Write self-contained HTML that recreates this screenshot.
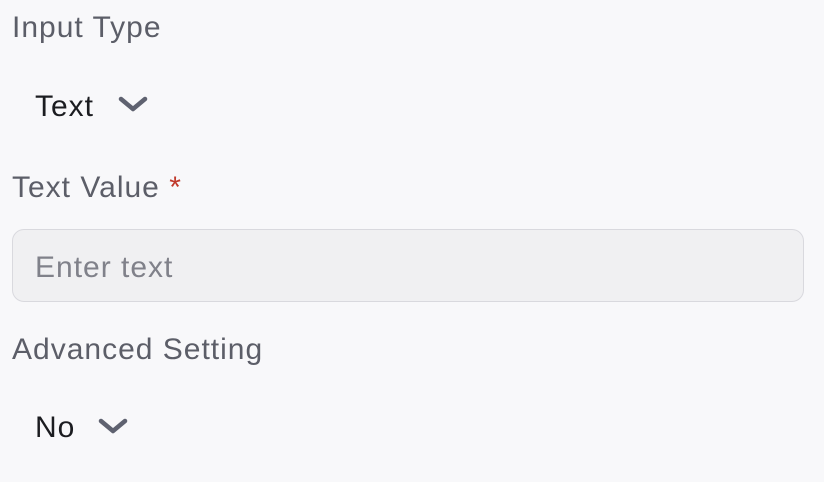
<!DOCTYPE html>
<html><head><meta charset="utf-8"><style>
html,body{margin:0;padding:0;width:824px;height:482px;background:#f8f8fa;overflow:hidden;font-family:"Liberation Sans",sans-serif}
.t{position:absolute;line-height:1;font-size:30px;letter-spacing:1px;white-space:nowrap}
.l{color:#5c5e68}
.v{color:#1b1c20}
.box{position:absolute;left:12px;top:229px;width:790px;height:71px;border:1.5px solid #d9d9de;border-radius:12px;background:#f0f0f2}
svg{position:absolute}
</style></head><body>
<div class="t l" style="left:12px;top:13px">Input Type</div>
<div class="t v" style="left:35px;top:92px">Text</div>
<svg style="left:116px;top:95px" width="32" height="20" viewBox="0 0 32 20"><path d="M5 4 L17 14 L29 4" fill="none" stroke="#5f6270" stroke-width="4.5" stroke-linecap="round" stroke-linejoin="round"/></svg>
<div class="t l" style="left:12px;top:173px">Text Value <span style="color:#c0392b">*</span></div>
<div class="box"></div>
<div class="t" style="left:35px;top:253px;color:#80818a">Enter text</div>
<div class="t l" style="left:12px;top:335px">Advanced Setting</div>
<div class="t v" style="left:35px;top:413px">No</div>
<svg style="left:96px;top:417px" width="32" height="20" viewBox="0 0 32 20"><path d="M5 4 L17 14 L29 4" fill="none" stroke="#5f6270" stroke-width="4.5" stroke-linecap="round" stroke-linejoin="round"/></svg>
</body></html>
